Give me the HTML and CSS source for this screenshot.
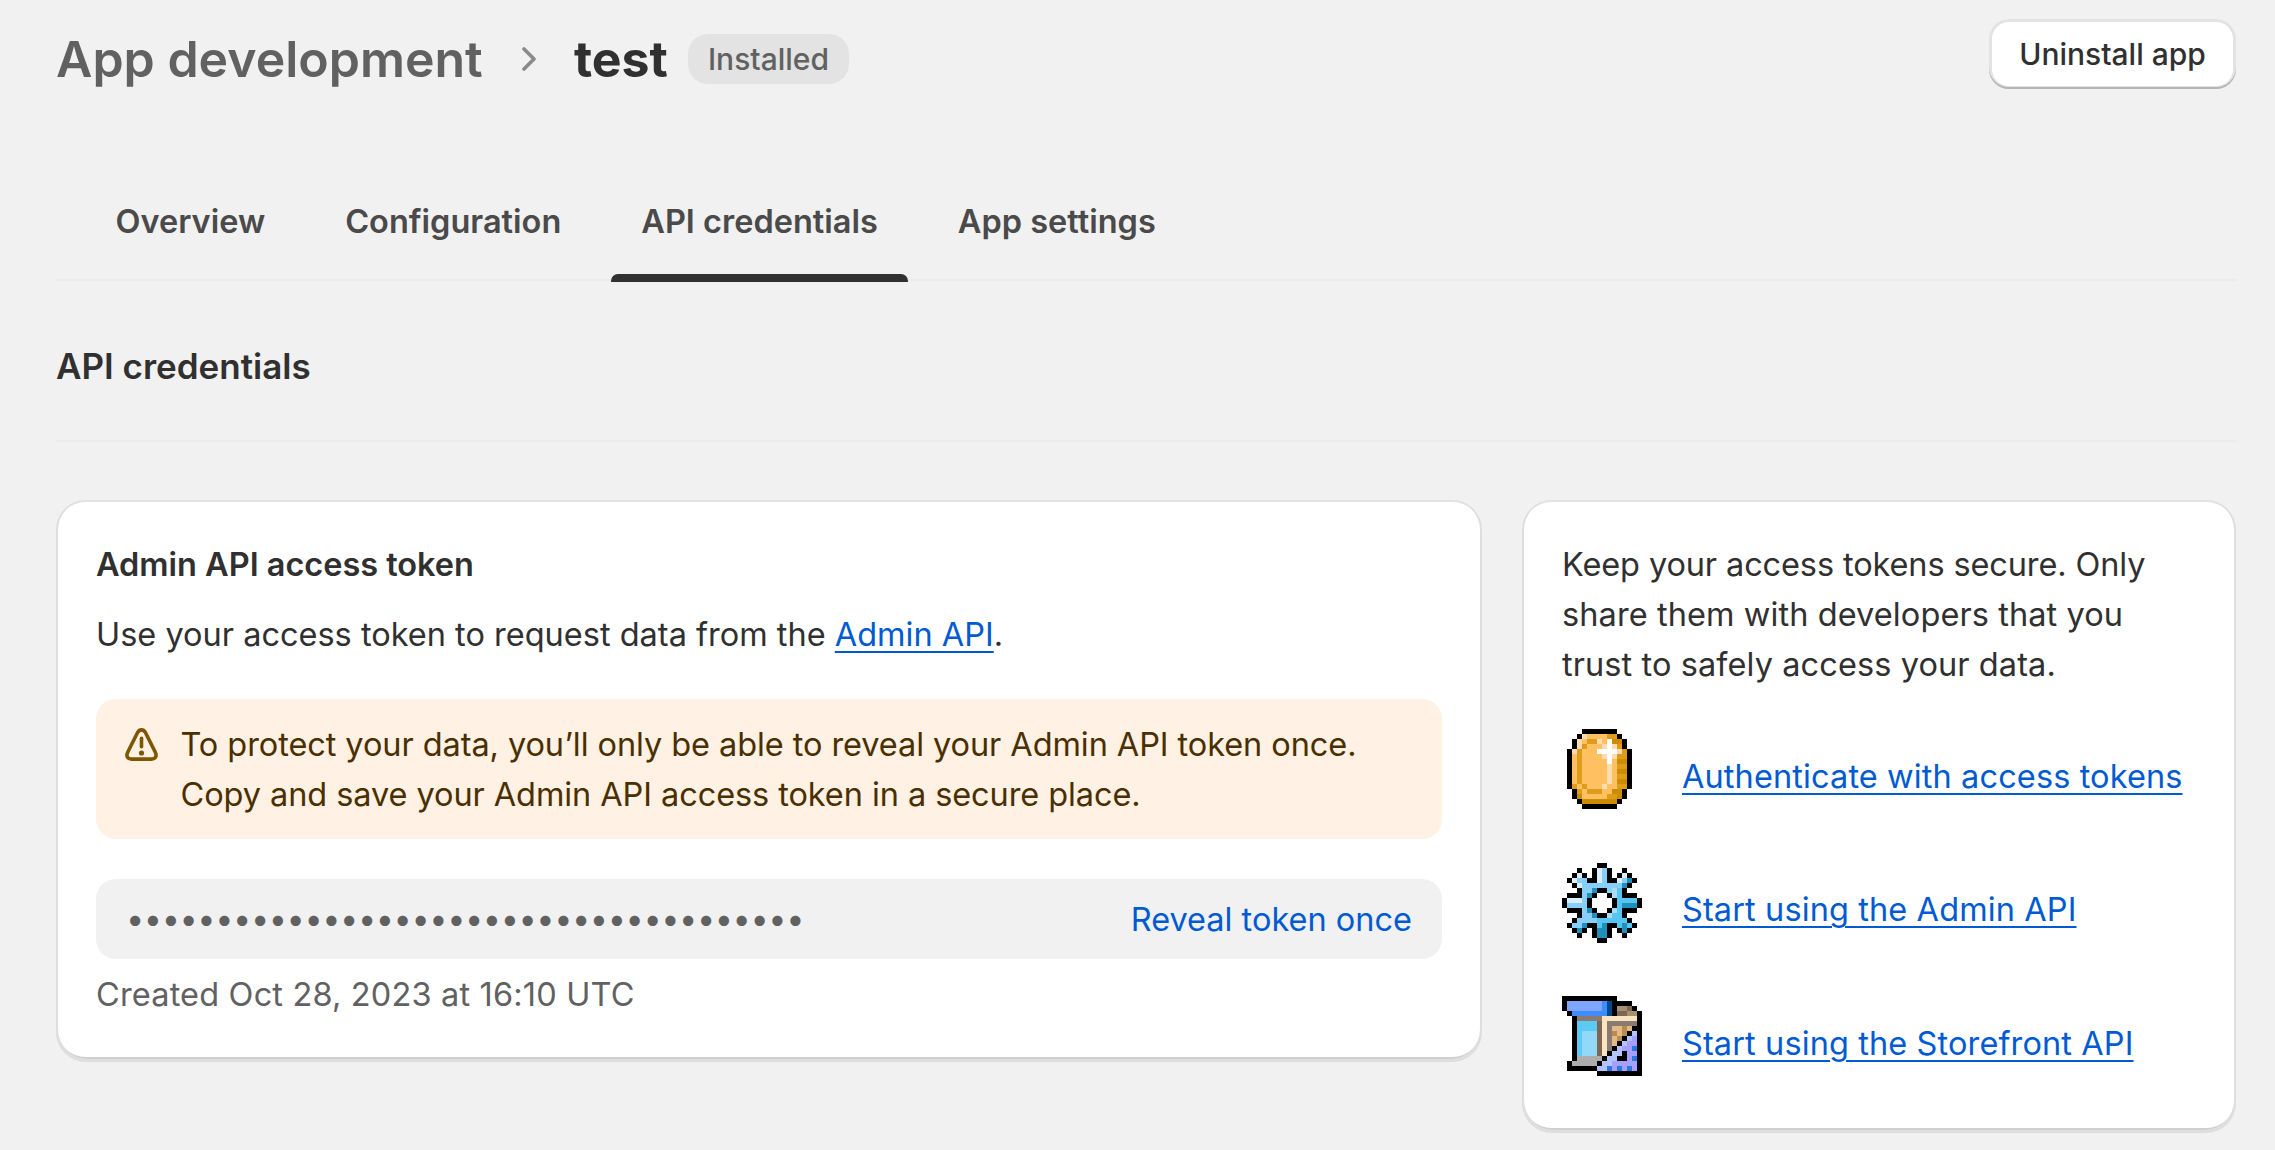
FILE: index.html
```html
<!DOCTYPE html>
<html lang="en">
<head>
<meta charset="utf-8">
<title>API credentials</title>
<link rel="stylesheet" href="styles.css">
</head>
<body>
<div class="page">
  <header class="header">
    <div class="crumbs">
      <span class="crumb">App development</span>
      <svg class="chevron" viewBox="0 0 14 24" fill="none"><path d="M2 2l10 10L2 22" stroke="#8a8a8a" stroke-width="3.6" stroke-linecap="round" stroke-linejoin="round"/></svg>
      <h1 class="title">test</h1>
      <span class="badge">Installed</span>
    </div>
    <button class="button">Uninstall app</button>
  </header>
  <nav class="tabs">
    <a class="tab">Overview</a>
    <a class="tab">Configuration</a>
    <a class="tab tab-active">API credentials</a>
    <a class="tab">App settings</a>
  </nav>
  <h2 class="section-title">API credentials</h2>
  <main class="columns">
    <section class="card card-token">
      <h3 class="card-title">Admin API access token</h3>
      <p class="intro">Use your access token to request data from the <a class="link">Admin API</a>.</p>
      <div class="banner">
        <svg class="warning" viewBox="0 0 33 33" fill="none" stroke="#7d5700" stroke-width="3.6" stroke-linecap="round" stroke-linejoin="round"><path d="M12.700 4.300 L2.700 24.300 C0.800 28.300 2.600 31.100 6.500 31.100 H26.500 C30.400 31.100 32.200 28.300 30.300 24.300 L20.300 4.300 C18.500 1 14.500 1 12.700 4.300Z"/><path d="M16.500 10.300v8.500"/><circle cx="16.500" cy="25" r="2.600" fill="#7d5700" stroke="none"/></svg>
        <p>To protect your data, you’ll only be able to reveal your Admin API token once.<br>Copy and save your Admin API access token in a secure place.</p>
      </div>
      <div class="token">
        <span class="dots">••••••••••••••••••••••••••••••••••••••</span>
        <a class="reveal">Reveal token once</a>
      </div>
      <p class="created">Created Oct 28, 2023 at 16:10 UTC</p>
    </section>
    <aside class="card card-help">
      <p class="help-text"><span class="help-lead">Keep your access tokens secure. Only</span> share them with developers that you trust to safely access your data.</p>
      <ul class="help-list">
        <li class="help-item">
          <svg class="pixel" viewBox="0 0 16 16" shape-rendering="crispEdges"><g transform="translate(0 .5)">
            <path stroke="#000" d="M4 0h7M3 1h9M2 2h11M2 3h11M1 4h13M1 5h13M1 6h13M1 7h13M1 8h13M1 9h13M1 10h13M1 11h13M2 12h11M2 13h11M3 14h9M4 15h7"/>
            <path stroke="#ffc062" d="M4 1h7M3 2h9M3 3h9M2 4h11M2 5h11M2 6h11M2 7h11M2 8h11M2 9h11M2 10h11M2 11h11M3 12h9M3 13h9"/>
            <path stroke="#de9c1a" d="M9 1h2M5 2h2M4 3h1M11 3h1M3 4h1M12 4h1M3 5h1M11 5h2M3 6h1M3 7h1M11 7h2M3 8h1M3 9h1M11 9h2M3 10h1M2 11h1M4 11h1M11 11h2M3 12h1M5 12h3M9 13h2"/>
            <path stroke="#cc8e00" d="M10 2h2M11 6h2M11 8h2M11 10h2M10 12h2M3 13h1M11 13h1M4 14h7"/>
            <path stroke="#ffdcb0" d="M4 1h1M3 2h1M7 2h1M3 3h1M8 3h1M10 3h1M2 4h1M11 4h1M8 5h1M10 5h1M9 7h1M9 8h1M9 9h1M9 10h1M8 11h1"/>
            <path stroke="#fff" d="M9 2h1M9 3h1M7 4h4M9 5h1M9 6h1"/>
          </g></svg>
          <a class="link">Authenticate with access tokens</a>
        </li>
        <li class="help-item">
          <svg class="pixel" viewBox="0 0 16 16" shape-rendering="crispEdges"><g transform="translate(0 .5)">
            <path stroke="#000" d="M7 0h2M3 1h1M6 1h4M12 1h1M2 2h3M6 2h4M11 2h3M1 3h4M5 3h10M2 4h12M3 5h10M1 6h14M0 7h16M0 8h16M1 9h14M3 10h10M2 11h12M1 12h14M2 13h3M6 13h4M11 13h3M3 14h1M6 14h4M12 14h1M7 15h2"/>
            <path stroke="#87cffa" d="M8 1h1M8 2h1M3 3h2M8 3h1M12 3h1M4 4h8M4 5h2M9 5h2M4 6h1M4 7h1M1 8h4M4 9h1M4 10h2M3 11h4M2 12h2"/>
            <path stroke="#a9dbf7" d="M10 5h1M10 6h1M10 9h1M9 10h1"/>
            <path stroke="#d9eefc" d="M7 1h1M3 2h1M7 2h1M12 2h1M2 3h1M7 3h1M11 3h1M3 4h1M1 7h3"/>
            <path stroke="#55c5f2" d="M11 5h1M11 6h1M11 7h4M11 8h1M11 9h1M10 10h2M7 11h6M7 12h1M11 12h1M13 12h1"/>
            <path stroke="#2090ba" d="M13 3h1M12 4h1M6 5h1M5 6h1M12 8h3M5 9h1M6 10h1M4 12h1M8 12h1M12 12h1M3 13h1M7 13h2M12 13h1M7 14h2"/>
            <path stroke="#fff" d="M7 6h2M6 7h4M6 8h4M7 9h2"/>
          </g></svg>
          <a class="link">Start using the Admin API</a>
        </li>
        <li class="help-item">
          <svg class="pixel" viewBox="0 0 16 16" shape-rendering="crispEdges"><g transform="translate(0 .5)">
            <path stroke="#000" d="M0 0h11M0 1h14M0 2h15M1 3h15M2 4h14M2 5h14M2 6h14M2 7h14M2 8h14M2 9h14M2 10h14M2 11h14M2 12h14M1 13h15M1 14h15M7 15h9"/>
            <path stroke="#7fa6ff" d="M1 1h7M1 2h7"/>
            <path stroke="#3f8cff" d="M8 1h1M8 2h1M2 3h7"/>
            <path stroke="#004a8f" d="M9 1h1M9 2h1M9 3h1"/>
            <path stroke="#a69072" d="M11 2h2M13 3h2"/>
            <path stroke="#806553" d="M13 2h1M11 3h2M7 5h1M7 6h1M7 7h1M7 8h1M7 9h1M7 10h1M7 11h1"/>
            <path stroke="#8a7a72" d="M3 4h5M9 5h6M9 6h1M9 7h1M9 8h1M9 9h1M9 10h1"/>
            <path stroke="#f9e4c0" d="M8 4h7M8 5h1M8 6h1M8 7h1M8 8h1M8 9h1M8 10h1M8 11h1"/>
            <path stroke="#5bcaf5" d="M3 5h4M3 6h4M3 7h1M3 8h1M3 9h1M3 10h1M3 11h1"/>
            <path stroke="#92d8f8" d="M4 7h3M4 8h3M4 9h3M4 10h3M4 11h3"/>
            <path stroke="#e3b987" d="M10 6h2M13 6h1M11 7h1M10 8h1M10 9h1"/>
            <path stroke="#b88b4f" d="M12 6h1M10 7h1M12 7h1M11 8h1"/>
            <path stroke="#adadad" d="M3 12h5M2 13h5"/>
            <path stroke="#b3c3ff" d="M14 7h1M13 8h1M12 9h1M11 10h1M10 11h2M9 12h2M8 13h2M7 14h2"/>
            <path stroke="#a5a0ff" d="M14 8h1M13 9h2M12 10h2M13 11h2M13 12h1M10 13h5M10 14h1M12 14h1M14 14h1"/>
            <path stroke="#2b78e5" d="M14 10h1M14 12h1M9 14h1M11 14h1M13 14h1"/>
          </g></svg>
          <a class="link">Start using the Storefront API</a>
        </li>
      </ul>
    </aside>
  </main>
</div>
</body>
</html>
```
FILE: styles.css
```css
* { box-sizing: border-box; }

body {
  margin: 0;
  background: #f1f1f1;
  color: #303030;
  font-family: Inter, "Liberation Sans", sans-serif;
  font-size: 32.5px;
  line-height: 50px;
}

h1, h2, h3, p, ul { margin: 0; padding: 0; font: inherit; }

.page {
  height: 1150px;
  padding: 19px 39px 0 56px;
  overflow: hidden;
}

.header {
  display: flex;
  justify-content: space-between;
  align-items: flex-start;
}

.crumbs {
  display: flex;
  align-items: center;
  height: 80px;
  font-size: 50px;
}

.crumb { width: 427px; color: #616161; font-weight: 610; white-space: nowrap; }

.chevron { width: 14px; height: 24px; margin: 0 38px 0 39px; }

.title { font-weight: 650; }

.badge {
  margin-left: 20px;
  padding: 0 20.5px 0 20px;
  border-radius: 20px;
  background: #e3e3e3;
  color: #616161;
  font-size: 30px;
  font-weight: 500;
}

.button {
  width: 247px;
  height: 70px;
  padding: 0 0 1px;
  border: 0;
  border-radius: 20px;
  background: #fff;
  box-shadow: inset 0 -2px 0 #b5b5b5, inset 0 0 0 3px #e3e3e3;
  color: #303030;
  font: 500 30px/50px Inter, sans-serif;
}

.tabs {
  display: flex;
  gap: 19px;
  height: 84px;
  margin-top: 98px;
  padding-left: 29px;
  border-bottom: 2px solid #ebebeb;
}

.tab {
  height: 85px;
  padding: 0 30.5px;
  color: #4a4a4a;
  font-weight: 600;
}

.tab-active { position: relative; }

.tab-active::after {
  content: "";
  position: absolute;
  left: 0;
  right: 0;
  bottom: 0;
  height: 8px;
  border-radius: 7px 7px 0 0;
  background: #303030;
}

.section-title {
  height: 161px;
  padding-top: 60px;
  border-bottom: 2px solid #ebebeb;
  font-size: 35px;
  font-weight: 600;
}

.columns {
  display: flex;
  align-items: flex-start;
  justify-content: space-between;
  margin-top: 58px;
}

.card {
  padding: 40px;
  border-radius: 30px;
  background: #fff;
  box-shadow: 0 3px 0 #dedede, inset 2px 0 0 #dedede, inset -2px 0 0 #dedede, inset 0 -2px 0 #cfcfcf, inset 0 2px 0 #e3e3e3;
}

.card-token { width: 1426px; height: 559px; }
.card-help { width: 714px; height: 630px; }

.card-title { font-weight: 600; letter-spacing: -0.03px; }
.intro { margin-top: 20px; }

.link {
  color: #005bd3;
  text-decoration: underline;
  text-decoration-thickness: 2px;
  text-underline-offset: 5px;
}

.banner {
  display: flex;
  gap: 23px;
  height: 140px;
  margin-top: 39px;
  padding: 21px 20px 19px 28.5px;
  border-radius: 20px;
  background: #fff1e3;
  color: #4a2f00;
  letter-spacing: -0.08px;
}

.warning { flex: none; width: 33px; height: 33px; margin-top: 7.5px; }

.token {
  display: flex;
  align-items: center;
  justify-content: space-between;
  height: 80px;
  margin-top: 40px;
  padding: 1px 30px 0;
  border-radius: 20px;
  background: #f1f1f1;
}

.dots { margin-top: -2px; color: #616161; letter-spacing: -0.44px; }
.reveal { color: #005bd3; }
.created { margin-top: 11px; color: #616161; letter-spacing: 0.17px; }

.help-text { width: 600px; letter-spacing: 0.09px; }
.help-lead { letter-spacing: -0.12px; }

.help-list {
  display: grid;
  row-gap: 53.33px;
  margin-top: 39.4px;
  list-style: none;
}

.help-item { display: flex; gap: 40px; height: 80px; }
.help-item .link { padding-top: 22.7px; letter-spacing: 0.11px; }
.pixel { flex: none; width: 80px; height: 80px; }
```
